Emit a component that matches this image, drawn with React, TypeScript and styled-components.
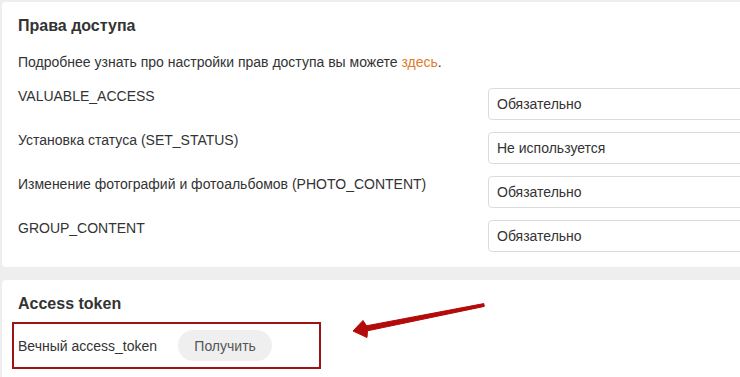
import React from "react";
import styled, { createGlobalStyle } from "styled-components";

const Global = createGlobalStyle`
  html, body { margin: 0; padding: 0; background: #eeeeee; overflow: hidden; }
  body { font-family: "Liberation Sans", Arial, sans-serif; color: #333; font-size: 14px; }
  * { box-sizing: border-box; }
`;

const Page = styled.div`
  position: relative;
  width: 900px;
  padding: 2px 0 0 2px;
  display: flex;
  flex-direction: column;
  gap: 13px;
`;

const Card = styled.section<{ $bottom?: number }>`
  background: #fff;
  border-radius: 4px;
  padding: 14px 16px ${(p) => p.$bottom ?? 15}px 16px;
`;

const Title = styled.h2`
  margin: 0;
  font-size: 16px;
  line-height: 20px;
  font-weight: bold;
  color: #333;
`;

const Lead = styled.p`
  margin: 18px 0 18px;
  font-size: 14px;
  line-height: 16px;
`;

const Link = styled.a`
  color: #e27a2c;
  text-decoration: none;
`;

const Rows = styled.div`
  display: grid;
  grid-template-columns: 470px 300px;
  row-gap: 12px;
`;

const Label = styled.div`
  font-size: 14px;
  line-height: 16px;
`;

const Select = styled.select`
  appearance: none;
  height: 32px;
  border: 1px solid #dcdcdc;
  border-radius: 4px;
  background: #fff;
  padding: 0 8px;
  font-family: "Liberation Sans", Arial, sans-serif;
  font-size: 14px;
  color: #333;
`;

const Highlight = styled.div`
  margin: 8px 0 0 -6px;
  width: 309px;
  border: 2px solid #9c1414;
  padding: 6px 4px;
  display: flex;
  align-items: center;
  gap: 21px;
`;

const PillButton = styled.button`
  height: 31px;
  width: 94px;
  border: none;
  border-radius: 16px;
  background: #efefef;
  color: #555;
  font-family: "Liberation Sans", Arial, sans-serif;
  font-size: 14px;
  cursor: pointer;
`;

const Arrow = styled.svg`
  position: absolute;
  left: 0;
  top: 0;
  width: 740px;
  height: 377px;
  pointer-events: none;
`;

const permissions = [
  { label: "VALUABLE_ACCESS", value: "Обязательно" },
  { label: "Установка статуса (SET_STATUS)", value: "Не используется" },
  { label: "Изменение фотографий и фотоальбомов (PHOTO_CONTENT)", value: "Обязательно" },
  { label: "GROUP_CONTENT", value: "Обязательно" },
];

export default function App() {
  return (
    <>
      <Global />
      <Page>
        <Card>
          <Title>Права доступа</Title>
          <Lead>
            Подробнее узнать про настройки прав доступа вы можете <Link href="#">здесь</Link>.
          </Lead>
          <Rows>
            {permissions.map((p) => (
              <React.Fragment key={p.label}>
                <Label>{p.label}</Label>
                <Select defaultValue={p.value}>
                  <option>Обязательно</option>
                  <option>Не используется</option>
                </Select>
              </React.Fragment>
            ))}
          </Rows>
        </Card>
        <Card $bottom={40}>
          <Title>Access token</Title>
          <Highlight>
            <Label>Вечный access_token</Label>
            <PillButton>Получить</PillButton>
          </Highlight>
        </Card>
        <Arrow viewBox="0 0 740 377">
          <polygon
            points="353,331 363,320.5 366.5,325.8 483.8,303.6 484.3,306.4 367.5,330.8 367,337.5"
            fill="#b30a0a"
            stroke="#b30a0a"
            strokeWidth="1"
            strokeLinejoin="round"
          />
        </Arrow>
      </Page>
    </>
  );
}
